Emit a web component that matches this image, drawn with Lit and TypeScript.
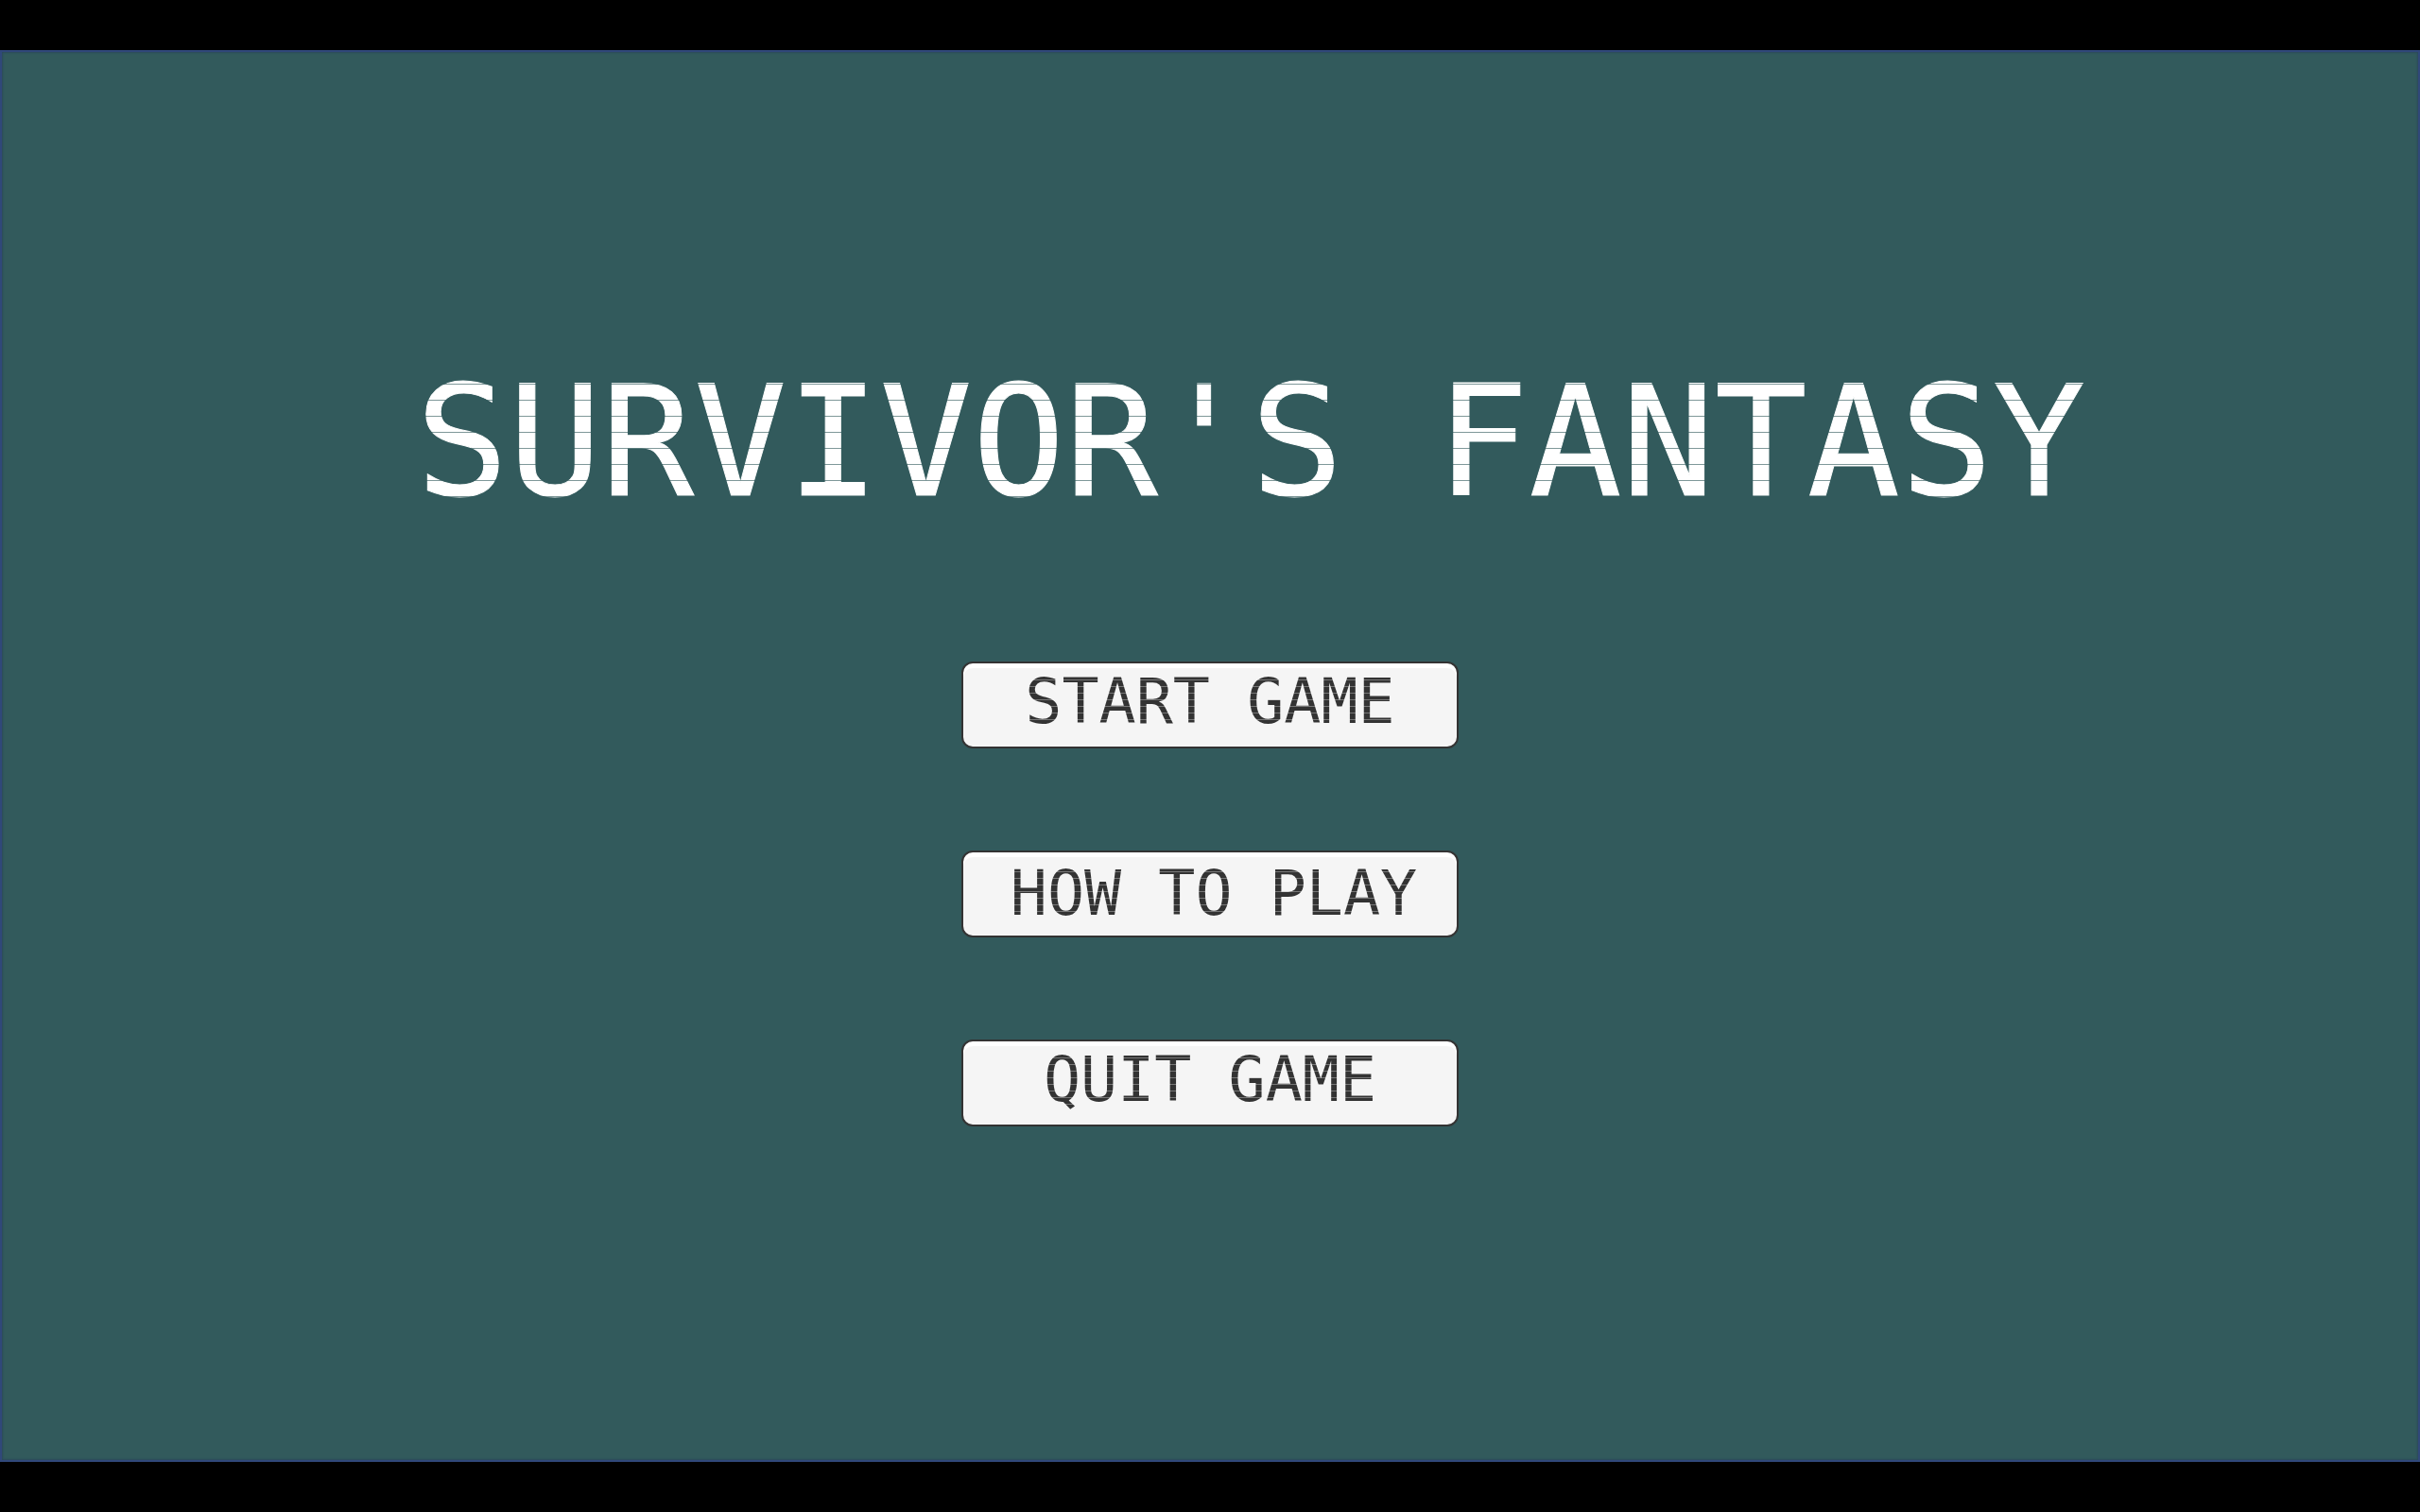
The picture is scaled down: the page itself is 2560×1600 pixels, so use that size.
import { LitElement, html, css } from "lit";
import { customElement } from "lit/decorators.js";

@customElement("app-root")
export class AppRoot extends LitElement {
  static styles = css`
    :host {
      display: block;
      background: #000;
      font-family: "DejaVu Sans Mono", "Liberation Mono", monospace;
    }
    .letterbox {
      display: flex;
      min-height: 100vh;
      box-sizing: border-box;
      padding: 53px 0;
    }
    .stage {
      flex: 1;
      display: flex;
      flex-direction: column;
      align-items: center;
      padding: 318px 0 0;
      background: #325a5c;
      border: 2px solid #30487a;
      box-shadow: inset 0 0 2px 1px #2c4a5c;
    }
    .title {
      margin: 0 0 137px;
      padding-left: 86px;
      font-size: 163px;
      line-height: 190px;
      font-weight: 400;
      white-space: nowrap;
    }
    .dots {
      display: block;
      color: transparent;
      background-clip: text;
      -webkit-background-clip: text;
    }
    .title .dots {
      -webkit-text-stroke: 1px transparent;
      background-color: #fff;
      background-image: linear-gradient(#7f9899 1px, transparent 1px);
      background-size: 98px 17px;
      background-position: 0 -1px;
    }
    .menu {
      display: flex;
      flex-direction: column;
      gap: 108px;
    }
    .item {
      width: 526px;
      height: 92px;
      box-sizing: border-box;
      padding: 0 0 6px;
      border: 2px solid #333;
      border-radius: 12px;
      background: #f5f5f5;
      box-shadow: inset 0 5px 0 #fff;
      color: #333;
      font-family: inherit;
      font-size: 65px;
      line-height: 76px;
      white-space: nowrap;
      cursor: pointer;
    }
    .low {
      padding: 0 0 0 8px;
    }
    .item .dots {
      background-color: #333;
      background-image: linear-gradient(#777 1px, transparent 1px);
      background-size: 39px 7px;
    }
  `;

  render() {
    return html`
      <div class="letterbox">
        <main class="stage">
          <h1 class="title"><span class="dots">SURVIVOR'S FANTASY</span></h1>
          <nav class="menu" aria-label="Main menu">
            <button class="item" type="button"><span class="dots">START GAME</span></button>
            <button class="item low" type="button"><span class="dots">HOW TO PLAY</span></button>
            <button class="item" type="button"><span class="dots">QUIT GAME</span></button>
          </nav>
        </main>
      </div>
    `;
  }
}
